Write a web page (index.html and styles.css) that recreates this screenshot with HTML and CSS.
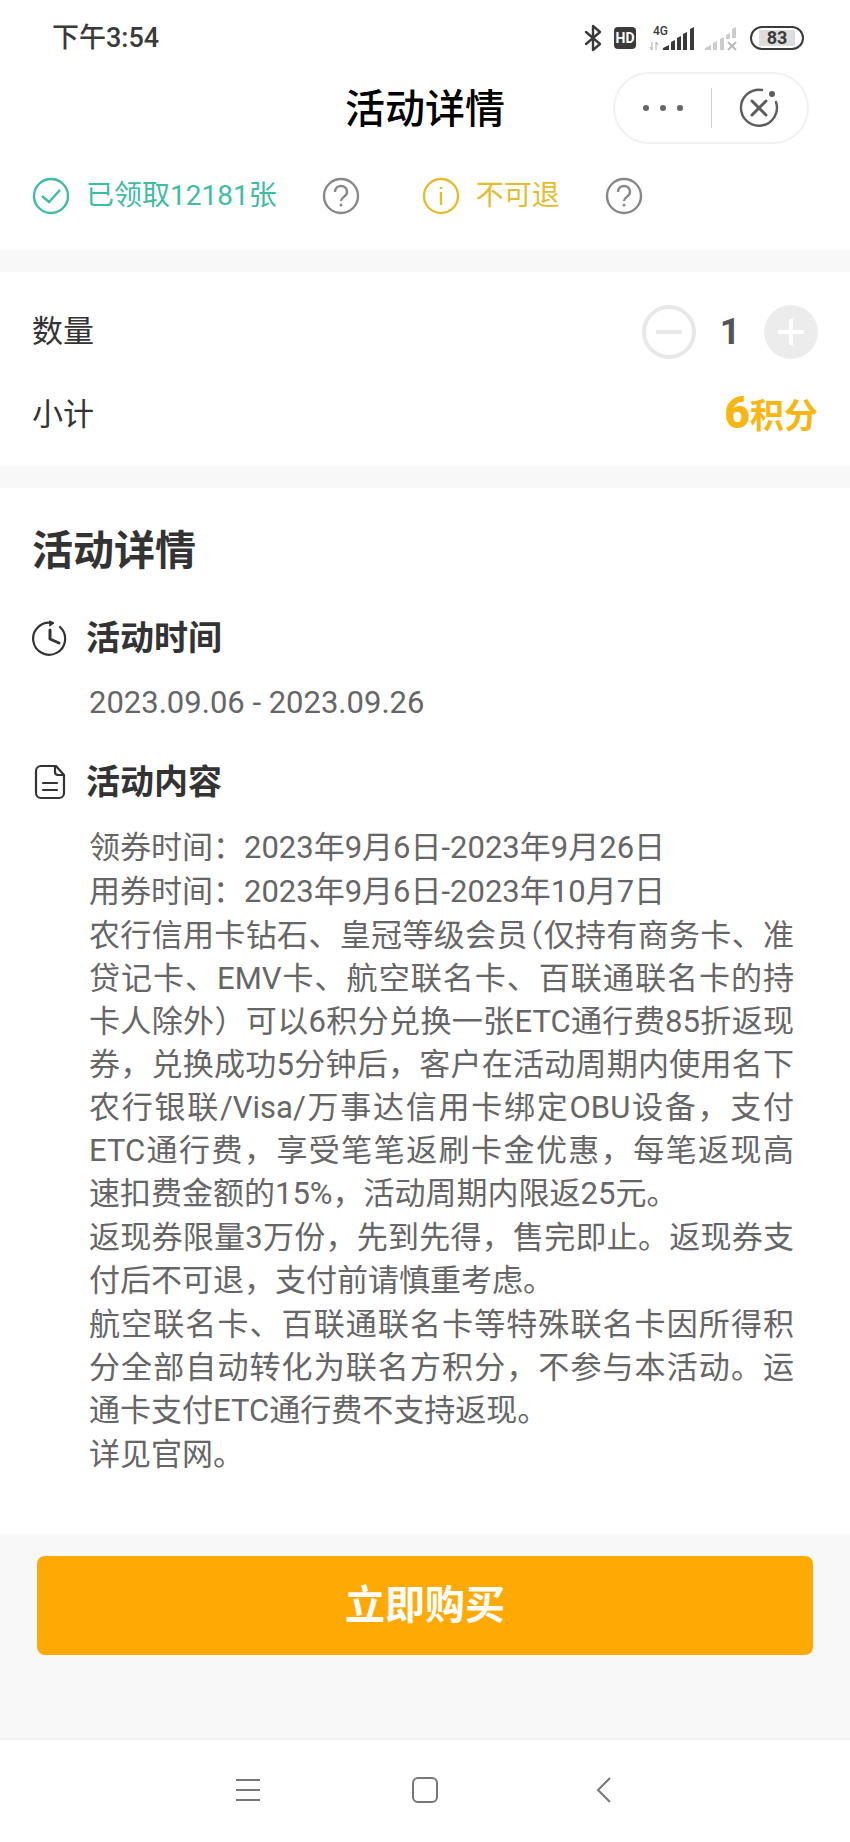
FILE: index.html
```
<!DOCTYPE html>
<html lang="zh-CN">
  <head>
    <meta charset="UTF-8" />
    <meta name="viewport" content="width=device-width, initial-scale=1.0" />
    <title>活动详情</title>
    <link rel="stylesheet" href="styles.css">
  </head>
  <body>
    <div class="status-bar">
      <span class="time">下午3:54</span>
      <div class="status-icons">
        <svg class="bluetooth" width="18" height="28" viewBox="0 0 18 28" fill="none" stroke="#3a3a3a" stroke-width="2.4" stroke-linejoin="round" stroke-linecap="round">
          <path d="M2 8l14 12-7 6V2l7 6L2 20" />
        </svg>
        <span class="hd">HD</span>
        <svg class="signal" width="46" height="28" viewBox="0 0 46 28">
          <text x="4" y="11" class="net">4G</text>
          <path d="M3 18v8l-2-3M7 26v-8l2 3" fill="none" stroke="#aaa" stroke-width="1" />
          <path d="M14 26v-2l6-3v5zM22 26v-8l4-2v10zM28 26V14l4-2v14zM34 26V10l4-2v18zM41 26V5l4-2v23z" fill="#3a3a3a" />
        </svg>
        <svg class="signal-off" width="34" height="28" viewBox="0 0 34 28">
          <path d="M1 26v-2l6-3v5zM9 26v-7l4-2v9zM16 26V15l4-2v13zM22 15v-4l4-2v6zM28 14V5l4-2v11z" fill="#ccc" />
          <path d="M24 18l8 8m0-8l-8 8" stroke="#bbb" stroke-width="2" />
        </svg>
        <span class="battery">83</span>
      </div>
    </div>

    <header class="title-bar">
      <h1>活动详情</h1>
      <div class="capsule">
        <button type="button" aria-label="更多">
          <svg width="42" height="8" viewBox="0 0 42 8" fill="#666">
            <circle cx="4" cy="4" r="3" />
            <circle cx="21" cy="4" r="3" />
            <circle cx="38" cy="4" r="3" />
          </svg>
        </button>
        <button type="button" aria-label="关闭">
          <svg width="40" height="40" viewBox="0 0 40 40" fill="none" stroke="#5c5c5c" stroke-width="2.4" stroke-linecap="round">
            <path d="M23 2A18 18 0 1 0 37 14" />
            <path d="M13 13l14 14m0-14L13 27" stroke-width="3" />
            <circle cx="33" cy="6" r="3" fill="#5c5c5c" stroke="none" />
          </svg>
        </button>
      </div>
    </header>

    <main>
      <section class="tags">
        <div class="tag green">
          <svg width="38" height="38" viewBox="0 0 38 38" fill="none" stroke="currentColor" stroke-width="2.4">
            <circle cx="19" cy="19" r="17" />
            <path d="M10 19l7 6 11-12" />
          </svg>
          <span>已领取12181张</span>
        </div>
        <button type="button" class="help" aria-label="领取说明">
          <svg width="38" height="38" viewBox="0 0 38 38" fill="none" stroke="currentColor" stroke-width="2.4">
            <circle cx="19" cy="19" r="17" />
            <path d="M13 15c0-8 12-8 12 0 0 5-6 5-6 9" />
            <circle cx="19" cy="28" r="1.5" fill="currentColor" stroke="none" />
          </svg>
        </button>
        <div class="tag yellow">
          <svg width="38" height="38" viewBox="0 0 38 38" fill="none" stroke="currentColor" stroke-width="2.4">
            <circle cx="19" cy="19" r="17" />
            <path d="M19 15v13M19 10v2" />
          </svg>
          <span>不可退</span>
        </div>
        <button type="button" class="help" aria-label="退款说明">
          <svg width="38" height="38" viewBox="0 0 38 38" fill="none" stroke="currentColor" stroke-width="2.4">
            <circle cx="19" cy="19" r="17" />
            <path d="M13 15c0-8 12-8 12 0 0 5-6 5-6 9" />
            <circle cx="19" cy="28" r="1.5" fill="currentColor" stroke="none" />
          </svg>
        </button>
      </section>

      <section class="order">
        <div class="row">
          <span>数量</span>
          <div class="stepper">
            <button type="button" aria-label="减少">
              <svg width="54" height="54" viewBox="0 0 54 54" fill="none" stroke="#e8e8e8">
                <circle cx="27" cy="27" r="25" stroke-width="4" />
                <path d="M14 27h26" stroke-width="4" />
              </svg>
            </button>
            <span class="count">1</span>
            <button type="button" aria-label="增加">
              <svg width="54" height="54" viewBox="0 0 54 54">
                <circle cx="27" cy="27" r="27" fill="#ececec" />
                <path d="M14 27h26M27 14v26" stroke="#fff" stroke-width="4" />
              </svg>
            </button>
          </div>
        </div>
        <div class="row">
          <span>小计</span>
          <span class="price"><b>6</b>积分</span>
        </div>
      </section>

      <section class="detail">
        <h2>活动详情</h2>

        <h3>
          <svg width="36" height="36" viewBox="0 0 36 36" fill="none" stroke="#333" stroke-width="2.2" stroke-linecap="round" stroke-linejoin="round">
            <path d="M20 3A16 16 0 1 0 28 7" />
            <path d="M18 1l4 2-4 3z" fill="#333" stroke-width="1" />
            <path d="M18 10v9l9 4" stroke-width="3" />
          </svg>
          <span>活动时间</span>
        </h3>
        <p class="date">2023.09.06 - 2023.09.26</p>

        <h3>
          <svg width="36" height="36" viewBox="0 0 36 36" fill="none" stroke="#333" stroke-width="2.2" stroke-linecap="round" stroke-linejoin="round">
            <path d="M24 2H9a5 5 0 0 0-5 5v22a5 5 0 0 0 5 5h18a5 5 0 0 0 5-5V11z" />
            <path d="M23 3v5q0 3 3 3h5" />
            <path d="M11 19h14M11 26h14" />
          </svg>
          <span>活动内容</span>
        </h3>
        <div class="content">
          <p>领券时间：2023年9月6日-2023年9月26日</p>
          <p>用券时间：2023年9月6日-2023年10月7日</p>
          <p>
            <span class="line">农行信用卡钻石、皇冠等级会员<span class="half">（</span>仅持有商务卡、准</span>
            <span class="line">贷记卡、EMV卡、航空联名卡、百联通联名卡的持</span>
            <span class="line">卡人除外）可以6积分兑换一张ETC通行费85折返现</span>
            <span class="line">券，兑换成功5分钟后，客户在活动周期内使用名下</span>
            <span class="line">农行银联/Visa/万事达信用卡绑定OBU设备，支付</span>
            <span class="line">ETC通行费，享受笔笔返刷卡金优惠，每笔返现高</span>
            速扣费金额的15%，活动周期内限返25元。
          </p>
          <p>
            <span class="line">返现券限量3万份，先到先得，售完即止。返现券支</span>
            付后不可退，支付前请慎重考虑。
          </p>
          <p>
            <span class="line">航空联名卡、百联通联名卡等特殊联名卡因所得积</span>
            <span class="line">分全部自动转化为联名方积分，不参与本活动。运</span>
            通卡支付ETC通行费不支持返现。
          </p>
          <p>详见官网。</p>
        </div>
      </section>
    </main>

    <footer class="buy-bar">
      <button type="button" class="buy">立即购买</button>
    </footer>

    <nav class="system-nav">
      <button type="button" aria-label="菜单">
        <svg width="26" height="26" viewBox="0 0 26 26" fill="none" stroke="#777" stroke-width="2">
          <path d="M2 3h24M2 13h24M2 23h24" />
        </svg>
      </button>
      <button type="button" aria-label="主页">
        <svg width="26" height="26" viewBox="0 0 26 26" fill="none" stroke="#777" stroke-width="2">
          <rect x="1" y="1" width="24" height="24" rx="5" />
        </svg>
      </button>
      <button type="button" aria-label="返回">
        <svg width="26" height="26" viewBox="0 0 26 26" fill="none" stroke="#777" stroke-width="2">
          <path d="M20 1L8 13l12 12" />
        </svg>
      </button>
    </nav>
  </body>
</html>
```

FILE: styles.css
```
* {
  box-sizing: border-box;
}

body {
  margin: 0;
  background-color: #fff;
  color: #333;
  font-family: Roboto, "Noto Sans CJK SC", sans-serif;
}

h1,
h2,
h3,
p {
  margin: 0;
}

button {
  padding: 0;
  border: 0;
  background: none;
  font-family: inherit;
  color: inherit;
  cursor: pointer;
}

svg {
  display: block;
}

/* phone status bar */
.status-bar {
  display: flex;
  justify-content: space-between;
  align-items: center;
  padding: 4px 46px 0 52px;
  height: 72px;
}

.time {
  font-size: 27px;
  font-weight: 500;
  line-height: 32px;
  color: #3a3a3a;
}

.status-icons {
  display: flex;
  align-items: center;
  color: #3a3a3a;
}

.hd {
  width: 22px;
  margin-left: 12px;
  border-radius: 4px;
  background-color: #3a3a3a;
  color: #fff;
  font-size: 14px;
  font-weight: 700;
  line-height: 22px;
  text-align: center;
}

.signal {
  margin-left: 13px;
}

.net {
  font-size: 12px;
  font-weight: 500;
  fill: #3a3a3a;
}

.signal-off {
  margin-left: 9px;
}

.battery {
  width: 54px;
  margin-left: 12px;
  border: 2px solid #3a3a3a;
  border-radius: 12px;
  background: linear-gradient(#ddd, #ddd) center / 36px 16px no-repeat;
  font-size: 18px;
  font-weight: 700;
  line-height: 20px;
  text-align: center;
}

/* title */
.title-bar {
  display: grid;
  grid-template-columns: 1fr auto 1fr;
  align-items: center;
  padding: 0 41px;
}

h1 {
  grid-column: 2;
  padding-top: 4px;
  font-size: 40px;
  font-weight: 500;
  line-height: 68px;
  color: #000;
}

.capsule {
  justify-self: end;
  display: flex;
  align-items: center;
  width: 196px;
  height: 72px;
  border: 2px solid #f1f1f1;
  border-radius: 36px;
}

.capsule button {
  flex: 1;
  display: flex;
  justify-content: center;
  align-items: center;
  height: 40px;
}

.capsule button + button {
  border-left: 1px solid #d0d0d0;
}

/* tags */
.tags {
  display: flex;
  align-items: center;
  padding: 33px 32px 35px;
  border-bottom: 22px solid #f8f8f8;
}

.tag {
  display: flex;
  align-items: center;
  gap: 16px;
  font-size: 28px;
  line-height: 38px;
}

.green {
  color: #3dbda3;
}

.yellow {
  color: #e3bd2e;
}

.help {
  margin: 0 62px 0 45px;
  color: #888;
}

/* quantity and subtotal */
.order {
  padding: 18px 32px 10px;
  border-bottom: 22px solid #f8f8f8;
}

.row {
  display: flex;
  justify-content: space-between;
  align-items: center;
  height: 83px;
  font-size: 31px;
  line-height: 44px;
}

.stepper {
  display: flex;
  align-items: center;
}

.count {
  width: 68px;
  font-size: 36px;
  font-weight: 700;
  color: #555;
  text-align: center;
}

.price {
  font-size: 34px;
  font-weight: 700;
  color: #f8b610;
}

.price b {
  font-size: 44px;
}

/* detail */
.detail {
  padding: 34px 32px 58px;
}

h2 {
  font-size: 41px;
  line-height: 58px;
}

h3 {
  display: flex;
  align-items: center;
  gap: 18px;
  margin-top: 33px;
  font-size: 34px;
  line-height: 50px;
}

.date {
  margin: 18px 0 0 57px;
  font-size: 31px;
  line-height: 43px;
  color: #666;
}

.content {
  display: flex;
  flex-direction: column;
  gap: 1px;
  margin: 19px 24px 0 57px;
  font-size: 31px;
  line-height: 43px;
  color: #666;
}

.line {
  display: block;
  text-align: justify;
  text-align-last: justify;
}

.half {
  font-feature-settings: "halt";
}

/* buy button */
.buy-bar {
  padding: 22px 37px 83px;
  border-bottom: 2px solid #f0f0f0;
  background-color: #f8f8f8;
}

.buy {
  display: block;
  width: 100%;
  border-radius: 8px;
  background-color: #ffa904;
  color: #fff;
  font-size: 40px;
  font-weight: 700;
  line-height: 99px;
}

/* phone navigation keys */
.system-nav {
  display: flex;
  justify-content: center;
  gap: 118px;
  padding: 20px 0 22px;
}

.system-nav button {
  display: flex;
  justify-content: center;
  align-items: center;
  width: 60px;
  height: 60px;
}
```
